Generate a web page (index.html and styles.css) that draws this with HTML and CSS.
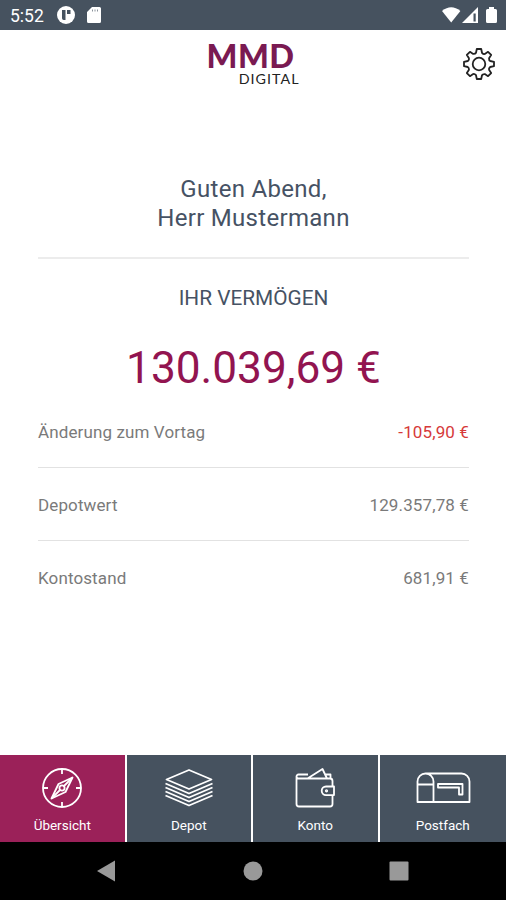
FILE: index.html
```
<!DOCTYPE html>
<html lang="de">
<head>
    <meta charset="UTF-8">
    <meta name="viewport" content="width=device-width, initial-scale=1.0">
    <title>MMD Digital</title>
    <link rel="stylesheet" href="styles.css">
</head>
<body>
    <div class="app">
        <div class="status-bar">
            <span class="time">5:52</span>
            <svg class="status-app" width="18" height="18" viewBox="0 0 18 18">
                <circle cx="9" cy="9" r="9" fill="#fff"/>
                <path d="M5 4h3.500v10H6.700A1.700 1.700 0 0 1 5 12.300zM10 4h3.500v4h-3.500z" fill="#46525f"/>
            </svg>
            <svg class="status-card" width="14" height="16" viewBox="0 0 14 16">
                <path d="M5 0h7.500A1.500 1.500 0 0 1 14 1.500v13a1.500 1.500 0 0 1-1.500 1.500h-11A1.500 1.500 0 0 1 0 14.500V5z" fill="#fff"/>
                <path d="M5.500 2.500v2M8 2.500v2M10.500 2.500v2" stroke="#8a929b" stroke-width="1"/>
            </svg>
            <svg class="status-right" width="56" height="17" viewBox="0 0 56 17">
                <path d="M0 4Q9.200-3.500 18.400 4L9.200 15.500z" fill="#fff"/>
                <path d="M36 0v16H20z" fill="#fff"/>
                <path d="M31.500 6.500h2.200v8h-2.200z" fill="#46525f"/>
                <path d="M47 0h5v2h1.500A1.500 1.500 0 0 1 55 3.500v11a1.500 1.500 0 0 1-1.500 1.500h-8a1.500 1.500 0 0 1-1.500-1.500v-11A1.500 1.500 0 0 1 45.500 2H47z" fill="#fff"/>
            </svg>
        </div>

        <header class="header">
            <div class="logo">
                <div class="logo-name">MMD</div>
                <div class="logo-sub">DIGITAL</div>
            </div>
            <svg class="settings" width="34" height="34" viewBox="-17 -17 34 34">
                <path d="M-2.200-15H2.200L3-11.200Q4.400-9.600 5.800-10.040L9.050-12.160 12.160-9.050 10.040-5.800Q9.900-3.700 11.200-3L15-2.200V2.200L11.200 3Q9.600 4.400 10.040 5.800L12.160 9.050 9.050 12.160 5.800 10.040Q3.700 9.900 3 11.200L2.200 15H-2.200L-3 11.200Q-4.400 9.600-5.800 10.040L-9.050 12.160-12.160 9.050-10.040 5.800Q-9.900 3.700-11.200 3L-15 2.200V-2.200L-11.200-3Q-9.600-4.400-10.040-5.800L-12.160-9.050-9.050-12.160-5.800-10.040Q-3.700-9.900-3-11.200Z"/>
                <circle r="6.300"/>
            </svg>
        </header>

        <main class="content">
            <h1 class="greeting">Guten Abend,<br>Herr Mustermann</h1>
            <h2 class="title">IHR VERMÖGEN</h2>
            <div class="total">130.039,69 €</div>
            <div class="row first">
                <span>Änderung zum Vortag</span>
                <span class="negative">-105,90 €</span>
            </div>
            <div class="row">
                <span>Depotwert</span>
                <span>129.357,78 €</span>
            </div>
            <div class="row">
                <span>Kontostand</span>
                <span>681,91 €</span>
            </div>
        </main>

        <nav class="tabs">
            <a class="tab active">
                <svg width="42" height="42" viewBox="0 0 42 42">
                    <circle cx="21" cy="21" r="19"/>
                    <path d="M21 2v5M21 35v5M2 21h5M35 21h5"/>
                    <path d="M31.500 10.500L24.500 25 10.500 31.500 17.500 17z"/>
                    <path d="M31.500 10.500L22.500 19.500M10.500 31.500L19.500 22.500"/>
                    <circle cx="21" cy="21" r="2.600"/>
                </svg>
                <span>Übersicht</span>
            </a>
            <a class="tab">
                <svg width="50" height="42" viewBox="0 0 50 42">
                    <path d="M25 3L47.500 12.500 25 22 2.500 12.500z"/>
                    <path d="M1.500 16.500L25 26.500 48.500 16.500M1.500 20.500L25 30.500 48.500 20.500M1.500 24.500L25 34.500 48.500 24.500M1.500 28.500L25 38.500 48.500 28.500"/>
                </svg>
                <span>Depot</span>
            </a>
            <a class="tab">
                <svg width="42" height="42" viewBox="0 0 42 42">
                    <path d="M13.500 11.500H4.500a2 2 0 0 1 0-4H14M2.500 9.500v27.500a2.500 2.500 0 0 0 2.500 2.500h31a2.500 2.500 0 0 0 2.500-2.500V28M38.500 20v-6a2.500 2.500 0 0 0-2.500-2.500H13.500L28.500 2l4.500 9.500M31.500 7.500h5v4"/>
                    <path d="M40 19.500H32a4.300 4.300 0 0 0 0 8.600H40z"/>
                    <circle cx="32.500" cy="23.800" r=".7"/>
                </svg>
                <span>Konto</span>
            </a>
            <a class="tab">
                <svg width="56" height="42" viewBox="0 0 56 42">
                    <path d="M2.500 35V14.500a8 8 0 0 1 16 0V35zM10.500 6.500H46.500a8 8 0 0 1 8 8V35H18.500M2.500 17.500h16"/>
                    <path d="M23 17h24.500v10.500h-3.500V20.500H23z"/>
                </svg>
                <span>Postfach</span>
            </a>
        </nav>

        <div class="system-nav">
            <svg width="20" height="22" viewBox="0 0 20 22"><path d="M18 .5v21L0 11z"/></svg>
            <svg width="20" height="20" viewBox="0 0 20 20"><circle cx="10" cy="10" r="9.500"/></svg>
            <svg width="20" height="20" viewBox="0 0 20 20"><rect x=".5" y=".5" width="19" height="19" rx="1"/></svg>
        </div>
    </div>
</body>
</html>
```
FILE: styles.css
```
/* Reset Styles */
body, html {
    margin: 0;
    padding: 0;
    height: 100%;
    overflow: hidden;
}

body {
    font-family: Roboto, "Liberation Sans", sans-serif;
    background-color: #fff;
}

svg {
    display: block;
    flex: none;
}

.app {
    height: 100%;
    display: flex;
    flex-direction: column;
}

/* Status Bar */
.status-bar {
    height: 30px;
    box-sizing: border-box;
    padding: 0 8px 0 10px;
    display: flex;
    align-items: center;
    background-color: #46525f;
    color: #fff;
}

.time {
    width: 47px;
    font-size: 17.5px;
    line-height: 30px;
    padding-top: 1px;
}

.status-card {
    margin-left: 12px;
}

.status-right {
    margin-left: auto;
}

/* Header */
.header {
    height: 70px;
    display: grid;
    grid-template-columns: 1fr auto 1fr;
    align-items: start;
}

.logo {
    grid-column: 2;
    width: 93px;
    padding-top: 9px;
}

.logo-name {
    font: 900 32.5px/34px Lato, sans-serif;
    letter-spacing: 0.5px;
    color: #7a1a52;
    white-space: nowrap;
}

.logo-sub {
    font: 400 14.3px/12px Lato, sans-serif;
    letter-spacing: 1px;
    color: #222;
    text-align: right;
    white-space: nowrap;
}

.settings {
    justify-self: end;
    margin: 17px 10px 0 0;
    fill: none;
    stroke: #222;
    stroke-width: 1.8;
    stroke-linejoin: round;
}

/* Content */
.content {
    flex: 1;
    padding: 75px 37px 0 38px;
    color: #7a7a7a;
    font-size: 17px;
}

.greeting {
    margin: 0;
    height: 82px;
    border-bottom: 2px solid #ececec;
    font-size: 24px;
    line-height: 29px;
    font-weight: 400;
    letter-spacing: 0.3px;
    text-align: center;
    color: #465264;
}

.title {
    margin: 25px 0 0;
    font-size: 20.8px;
    line-height: 28px;
    font-weight: 400;
    text-align: center;
    color: #465264;
}

.total {
    margin-top: 26px;
    font-size: 44.2px;
    line-height: 60px;
    text-align: center;
    color: #921450;
}

.row {
    height: 72px;
    display: flex;
    justify-content: space-between;
    align-items: center;
    border-top: 1px solid #e2e2e2;
    letter-spacing: 0.12px;
}

.row span {
    padding-top: 1px;
}

.row.first {
    height: 66px;
    padding-bottom: 3px;
    border: 0;
}

.negative {
    color: #d63a3a;
}

/* Bottom Tabs */
.tabs {
    height: 87px;
    display: grid;
    grid-template-columns: repeat(3, 124.5px) 1fr;
    gap: 2px;
}

.tab {
    display: flex;
    flex-direction: column;
    align-items: center;
    padding-top: 12px;
    background-color: #46525f;
    color: #fff;
    font-size: 13.5px;
    line-height: 16px;
}

.tab.active {
    background-color: #9b2159;
}

.tab svg {
    margin-bottom: 8px;
    fill: none;
    stroke: #fff;
    stroke-width: 1.8;
    stroke-linejoin: round;
}

/* System Navigation */
.system-nav {
    height: 58px;
    display: flex;
    justify-content: space-between;
    align-items: center;
    box-sizing: border-box;
    padding: 0 97px;
    background-color: #000;
    fill: #999;
}
```
